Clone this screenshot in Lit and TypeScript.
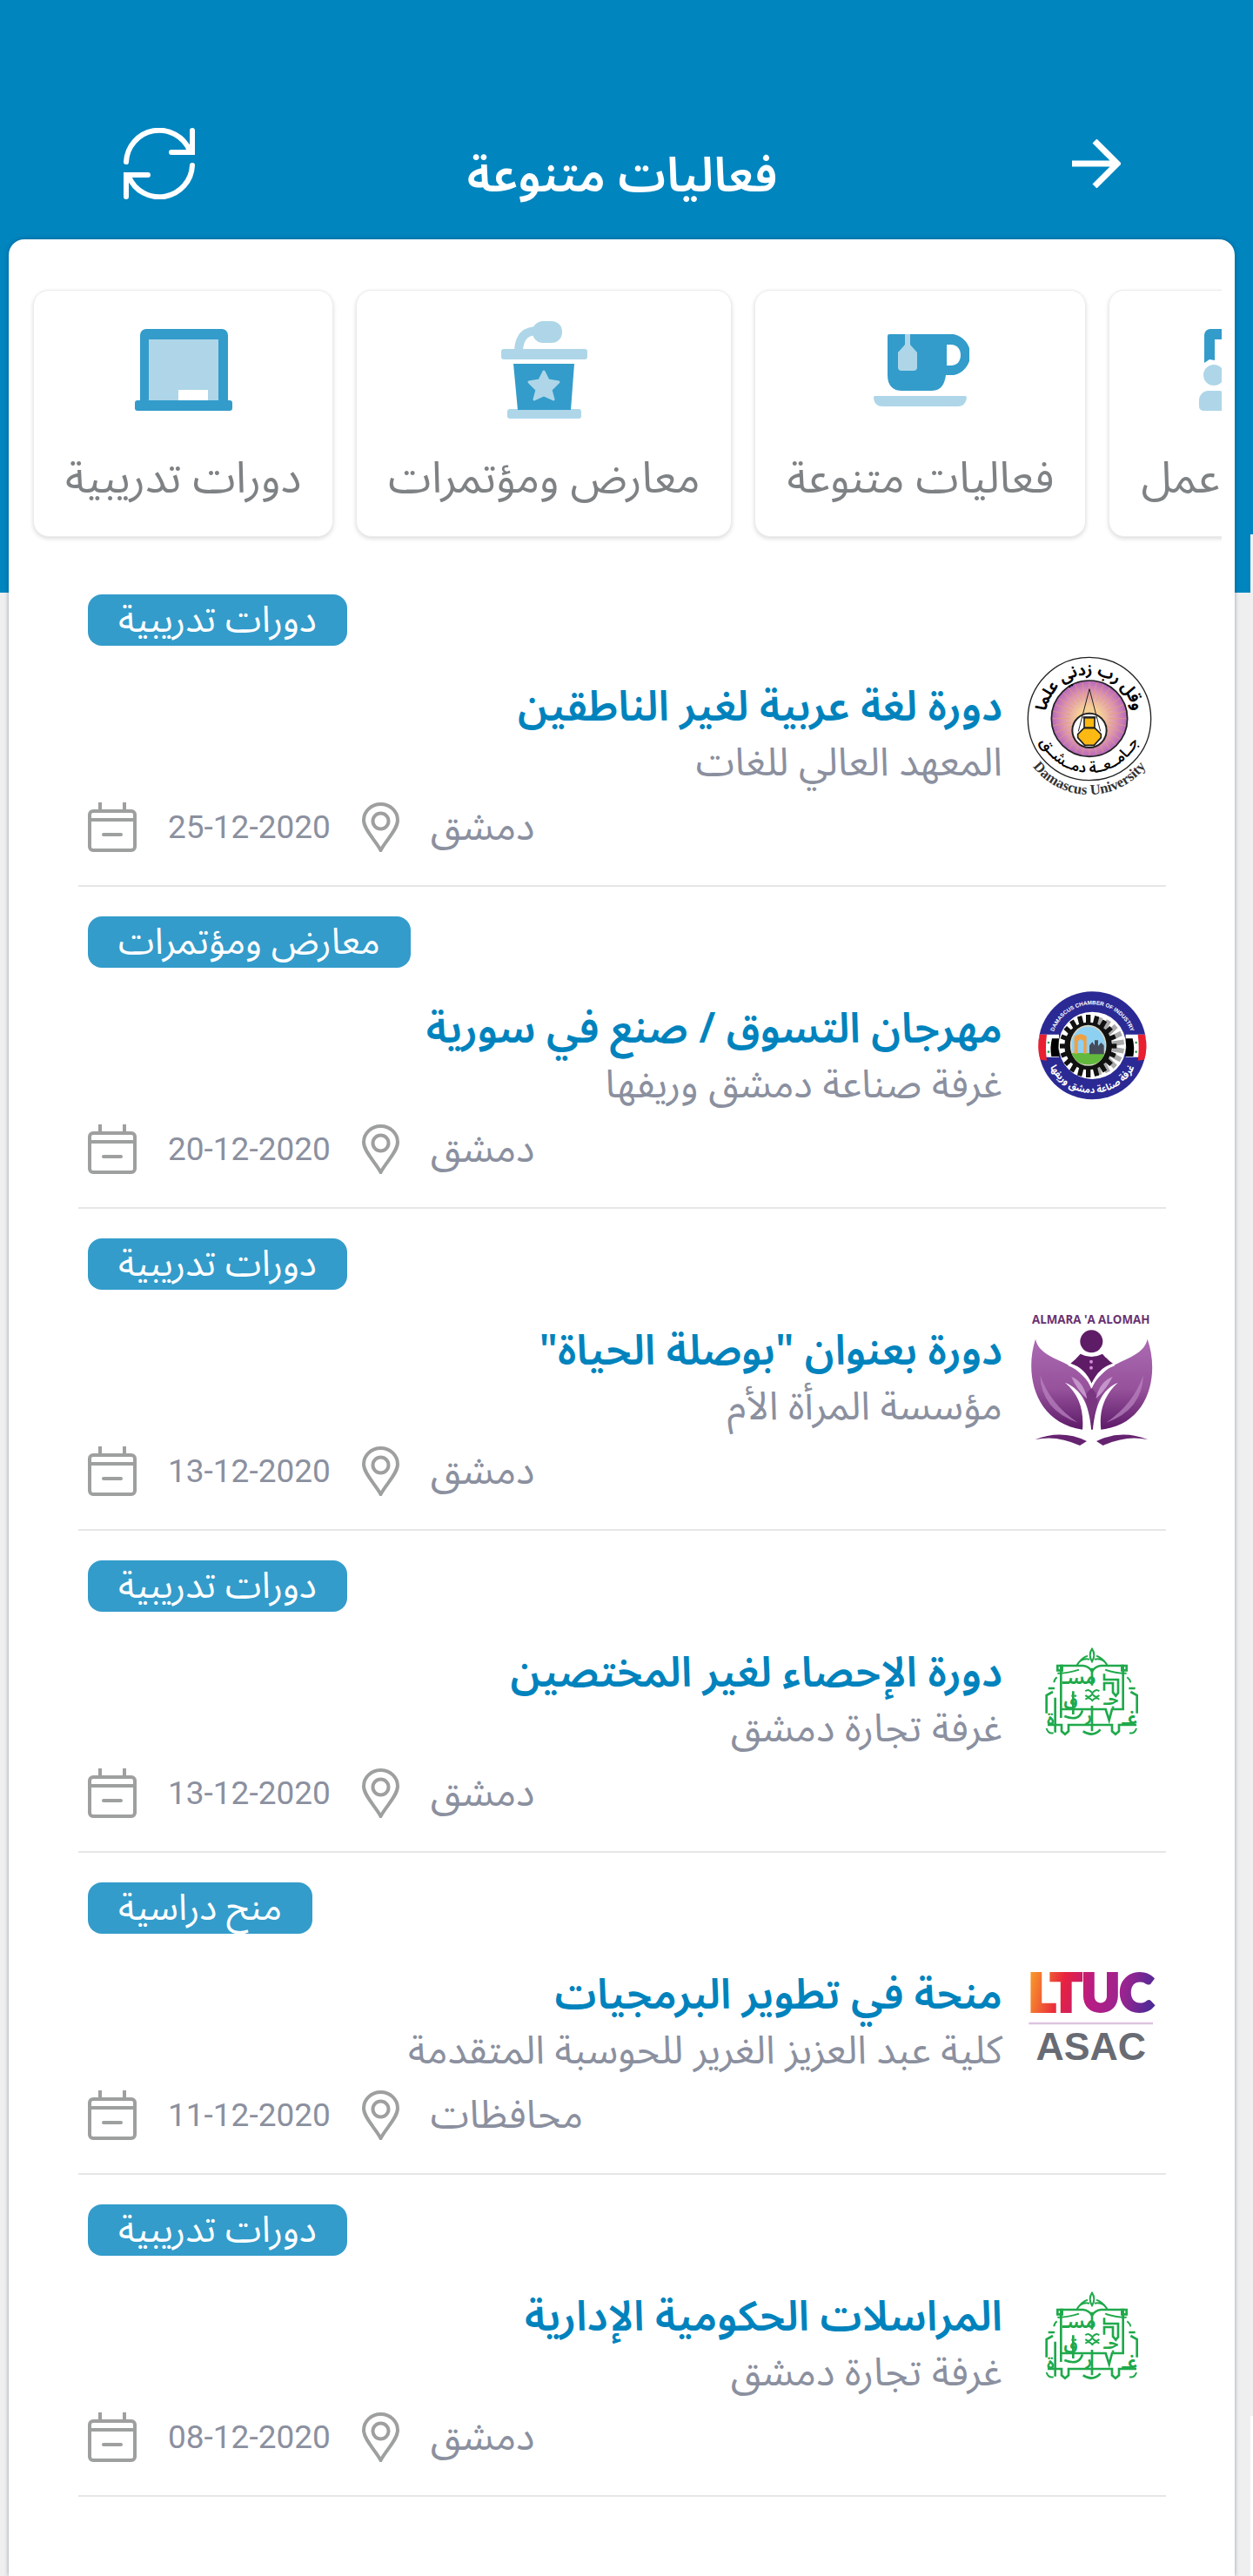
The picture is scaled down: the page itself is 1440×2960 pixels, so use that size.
import { LitElement, html, svg, css, TemplateResult } from "lit";
import { customElement, property } from "lit/decorators.js";

type LogoName = "university" | "industry" | "woman" | "commerce" | "ltuc";
type CategoryIcon = "board" | "podium" | "cup" | "workshop";

interface EventItem {
  category: string;
  title: string;
  host: string;
  date: string;
  city: string;
  logo: LogoName;
}

const CATEGORIES: { label: string; icon: CategoryIcon }[] = [
  { label: "دورات تدريبية", icon: "board" },
  { label: "معارض ومؤتمرات", icon: "podium" },
  { label: "فعاليات متنوعة", icon: "cup" },
  { label: "ورشات عمل", icon: "workshop" },
];

const EVENTS: EventItem[] = [
  { category: "دورات تدريبية", title: "دورة لغة عربية لغير الناطقين", host: "المعهد العالي للغات", date: "25-12-2020", city: "دمشق", logo: "university" },
  { category: "معارض ومؤتمرات", title: "مهرجان التسوق / صنع في سورية", host: "غرفة صناعة دمشق وريفها", date: "20-12-2020", city: "دمشق", logo: "industry" },
  { category: "دورات تدريبية", title: "دورة بعنوان \"بوصلة الحياة\"", host: "مؤسسة المرأة الأم", date: "13-12-2020", city: "دمشق", logo: "woman" },
  { category: "دورات تدريبية", title: "دورة الإحصاء لغير المختصين", host: "غرفة تجارة دمشق", date: "13-12-2020", city: "دمشق", logo: "commerce" },
  { category: "منح دراسية", title: "منحة في تطوير البرمجيات", host: "كلية عبد العزيز الغرير للحوسبة المتقدمة", date: "11-12-2020", city: "محافظات", logo: "ltuc" },
  { category: "دورات تدريبية", title: "المراسلات الحكومية الإدارية", host: "غرفة تجارة دمشق", date: "08-12-2020", city: "دمشق", logo: "commerce" },
];

const range = (n: number) => Array.from({ length: n }, (_, i) => i);

const categoryIcons: Record<CategoryIcon, TemplateResult> = {
  board: svg`
    <path fill="#339ccb" d="M6 94V16a7 7 0 0 1 7-7h87a7 7 0 0 1 7 7v78z"/>
    <rect fill="#aed6e8" x="16" y="21" width="80" height="71"/>
    <rect fill="#fff" x="50" y="79" width="34" height="12"/>
    <rect fill="#339ccb" x="0" y="91" width="112" height="12" rx="3"/>`,
  podium: svg`
    <g fill="#aed6e8">
      <rect x="7" y="32" width="99" height="12" rx="3"/>
      <rect x="14" y="101" width="85" height="11" rx="3"/>
      <rect x="43" y="0" width="34" height="25" rx="12"/>
    </g>
    <path d="M27 33c1-15 8-22 22-22" fill="none" stroke="#aed6e8" stroke-width="10"/>
    <path fill="#339ccb" d="M21 49h70l-4 53H26z"/>
    <path fill="#aed6e8" stroke="#aed6e8" stroke-width="3" stroke-linejoin="round"
      d="M56 58l5 10 12 2-9 9 3 11-11-5-11 5 3-11-9-9 12-2z"/>`,
  cup: svg`
    <path fill="#339ccb" fill-rule="evenodd"
      d="M20 15h74a24 24 0 0 1 0 47h-9c-1 9-5 18-16 18H35C24 80 18 74 18 62V17a2 2 0 0 1 2-2zM86 27v24h5c7 0 11-5 11-12s-4-12-11-12z"/>
    <path fill="#aed6e8" d="M38 15h6v12l8 9v18a4 4 0 0 1-4 3H34a4 4 0 0 1-4-3V36l8-9z"/>
    <path fill="#aed6e8" d="M3 86h104a2 2 0 0 1 2 2c-1 6-4 10-10 10H12C5 98 2 93 2 87z"/>`,
  workshop: svg`
    <path fill="#339ccb" d="M6 48V16a7 7 0 0 1 7-7h86a7 7 0 0 1 7 7v32l-6-4-6 2V21H18v24l-6-1z"/>
    <g fill="#aed6e8">
      <circle cx="17" cy="62" r="12"/><circle cx="56" cy="62" r="12"/><circle cx="95" cy="62" r="12"/>
      <path d="M0 98V91a11 11 0 0 1 11-11h12a11 11 0 0 1 11 11v7a5 5 0 0 1-5 5H5a5 5 0 0 1-5-5z"/>
      <path d="M39 98V91a11 11 0 0 1 11-11h12a11 11 0 0 1 11 11v7a5 5 0 0 1-5 5H44a5 5 0 0 1-5-5z"/>
      <path d="M78 98V91a11 11 0 0 1 11-11h12a11 11 0 0 1 11 11v7a5 5 0 0 1-5 5H83a5 5 0 0 1-5-5z"/>
    </g>`,
};

const logos: Record<LogoName, TemplateResult> = {
  university: html`<svg viewBox="39 33 480 540" role="img" aria-label="Damascus University">
    <defs>
      <radialGradient id="sun"><stop offset=".3" stop-color="#f6cf96"/><stop offset=".7" stop-color="#dd96b0"/><stop offset="1" stop-color="#b666bb"/></radialGradient>
      <path id="motto" d="M124 285A152 152 0 0 1 428 285"/>
      <path id="name-ar" d="M90 285A186 186 0 0 0 462 285"/>
      <path id="name-en" d="M47 390A246 246 0 0 0 505 390"/>
    </defs>
    <circle cx="276" cy="285" r="212" fill="#fff" stroke="#222" stroke-width="4"/>
    <circle cx="276" cy="284" r="131" fill="url(#sun)" stroke="#222" stroke-width="5"/>
    <g stroke="#e8a06e" stroke-width="3" opacity=".7">
      ${range(32).map((i) => {
        const a = (i * Math.PI) / 16;
        return svg`<line x1=${276 + 66 * Math.cos(a)} y1=${284 + 66 * Math.sin(a)} x2=${276 + 126 * Math.cos(a)} y2=${284 + 126 * Math.sin(a)}/>`;
      })}
    </g>
    <circle cx="276" cy="325" r="59" fill="#fff" stroke="#222" stroke-width="6"/>
    <path d="M276 182l-38 146M276 182l38 146" stroke="#222" stroke-width="3" fill="none"/>
    <path d="M258 280h36v36l22 22v12l-24 26h-32l-24-26v-12l22-22z" fill="#fdb913" stroke="#222" stroke-width="5"/>
    <path d="M254 280h44M258 316h36" stroke="#222" stroke-width="7"/>
    <text class="ar" font-size="54" font-weight="700" text-anchor="middle" direction="rtl"><textPath href="#motto" startOffset="50%">وقل رب زدني علما</textPath></text>
    <text class="ar" font-size="50" font-weight="600" text-anchor="middle" direction="rtl"><textPath href="#name-ar" startOffset="50%">جــامــعــة دمــشــق</textPath></text>
    <text class="serif" font-size="50" font-weight="700" fill="#333" text-anchor="middle"><textPath href="#name-en" startOffset="50%">Damascus University</textPath></text>
  </svg>`,
  industry: html`<svg viewBox="39 6 480 540" role="img" aria-label="Damascus Chamber of Industry">
    <defs>
      <path id="top-arc" d="M145 274A141 141 0 0 1 427 274"/>
      <path id="bottom-arc" d="M122 274A164 164 0 0 0 450 274"/>
    </defs>
    <circle cx="286" cy="274" r="186" fill="#2b2a94"/>
    <circle cx="286" cy="274" r="116" fill="#fff"/>
    <path d="M105 236h66v78h-66q-12-39 0-78z" fill="#fff"/><path d="M467 236h-66v78h66q12-39 0-78z" fill="#fff"/>
    <path d="M105 236h24q-6 44 0 90l-22-3q-14-43-2-87z" fill="#e8202f"/><path d="M467 236h-24q6 44 0 90l22-3q14-43 2-87z" fill="#e8202f"/>
    <path d="M147 250h24q-4 32 2 62h-28q-6-31 2-62z"/><path d="M425 250h-24q4 32-2 62h28q6-31-2-62z"/>
    <g fill="#2b9d56"><circle cx="135" cy="264" r="4"/><circle cx="135" cy="296" r="4"/><circle cx="437" cy="264" r="4"/><circle cx="437" cy="296" r="4"/></g>
    <g stroke="#aaa" stroke-width="17">
      ${range(10).map((i) => {
        const a = ((i * 18 - 80) * Math.PI) / 180;
        return svg`<line x1=${296 + 60 * Math.cos(a)} y1=${276 + 60 * Math.sin(a)} x2=${296 + 100 * Math.cos(a)} y2=${276 + 100 * Math.sin(a)}/>`;
      })}
    </g>
    <g stroke="#111" stroke-width="16">
      ${range(20).map((i) => {
        const a = (i * Math.PI) / 10;
        return svg`<line x1=${272 + 60 * Math.cos(a)} y1=${276 + 60 * Math.sin(a)} x2=${272 + 98 * Math.cos(a)} y2=${276 + 108 * Math.sin(a)}/>`;
      })}
    </g>
    <circle cx="272" cy="276" r="82" fill="#111"/>
    <ellipse cx="272" cy="274" rx="60" ry="68" fill="#8ed0f2" stroke="#d6d6c4" stroke-width="5"/>
    <path d="M215 300h114q-12 40-57 40t-57-40z" fill="#63b93e"/>
    <path d="M224 302v-58q20-18 42-2v60h-10v-42q-10-14-20 0v42z" fill="#f0a043"/>
    <path d="M276 304v-30l10-12 8 12v-18h12v20l10-12 10 10v30z" fill="#444c5c"/>
    <text class="label" font-weight="700" fill="#fff" text-anchor="middle"><textPath href="#top-arc" startOffset="50%">DAMASCUS CHAMBER OF INDUSTRY</textPath></text>
    <text class="ar" font-size="32" font-weight="700" fill="#fff" text-anchor="middle" direction="rtl"><textPath href="#bottom-arc" startOffset="50%">غرفة صناعة دمشق وريفها</textPath></text>
  </svg>`,
  woman: html`<svg viewBox="39 6 480 540" role="img" aria-label="Almara'a Alomah">
    <defs>
      <linearGradient id="petal" x1="0" y1="0" x2="0" y2="1"><stop offset="0" stop-color="#ab6bb2"/><stop offset=".55" stop-color="#96529b"/><stop offset="1" stop-color="#5d1a68"/></linearGradient>
    </defs>
    <text class="latin" x="281" y="124" font-size="40" font-weight="700" fill="#6a3170" text-anchor="middle">ALMARA 'A ALOMAH</text>
    <circle cx="283" cy="184" r="39" fill="#5f1c66"/>
    <path d="M90 176C104 240 190 245 240 290 262 310 276 326 284 345 292 326 304 310 326 290 376 245 462 240 476 176 520 300 480 470 316 488L252 488C90 465 50 300 90 176z" fill="url(#petal)"/>
    <path d="M211 260q16-12 34-33 38 20 76 0 20 24 36 33-50 15-73 70-23-55-73-70z" fill="#5f1c66"/>
    <path d="M204 264q54 18 79 74 25-56 79-74" fill="none" stroke="#fff" stroke-width="8"/>
    <circle cx="282" cy="254" r="6" fill="#d58bd6"/><circle cx="282" cy="275" r="6" fill="#d58bd6"/>
    <path d="M192 326C250 350 280 400 285 524 292 400 320 350 374 326 330 366 308 420 316 490L252 490C258 420 240 366 192 326z" fill="#fff"/>
    <path d="M284 346C300 360 304 380 303 392 292 412 287 440 284 465 280 440 276 412 264 392 258 372 268 358 284 346z" fill="#7a3580"/>
    <path d="M214 306Q256 322 268 382 232 350 214 306zM356 306Q310 322 298 382 334 350 356 306z" fill="#c594cb"/>
    <path d="M106 300Q110 420 236 464 140 400 106 300zM462 300Q458 420 334 464 428 400 462 300z" fill="#bb86c2" opacity=".7"/>
    <path d="M88 523Q180 486 267 528L243 543Q160 505 88 523zM478 523Q386 486 300 528L323 543Q406 505 478 523z" fill="#662370"/>
  </svg>`,
  commerce: html`<svg viewBox="39 -24 480 540" role="img" aria-label="غرفة تجارة دمشق">
    <g fill="none" stroke="#1fa94b" stroke-width="8">
      <path d="M178 342V162h76q20 2 31 20 11-18 31-20h76v150h-38l-10 38-12-38H178"/>
      <path d="M166 162h16v16h-16zM388 162h16v16h-16z"/>
      <path d="M128 326v-62l22-12M440 326v-62l-22-12M134 240h22M412 240h22"/>
      <path d="M158 272v120M132 366h48v22l12 10 12-10v-22h150v22l12 10 12-10v-22h60"/>
      <path d="M285 170v60M285 300v88M327 190v20h48v46l-8 10-10-12v-32h-30v26M220 250v80"/>
      <path d="M254 388q34 22 60-6M190 336q50 20 62-20"/>
      <path d="M262 250q12-10 24 6 12-16 24-6M262 264q12 12 24-4 12 16 24 4M262 278q12-10 24 4 12-14 24-4" stroke-width="6"/>
    </g>
    <g fill="none" stroke="#1fa94b" stroke-width="6">
      <path d="M285 104q-14 20 0 44 14-24 0-44zM276 140q-30-6-44 22M294 140q30-6 44 22M232 162q14-26 38-34M338 162q-14-26-38-34"/>
      <path d="M166 188q30 2 74-12M404 188q-30 2-74-12M164 202q-10 8-10 18M406 202q10 8 12 18M128 378q6 20 24 16M438 378q-6 20-24 16"/>
    </g>
    <g class="ar" fill="#1fa94b" font-weight="700" direction="rtl" text-anchor="middle">
      <text x="240" y="226" font-size="62">مسـ</text>
      <text x="212" y="300" font-size="58">ق</text>
      <text x="350" y="298" font-size="56">جـ</text>
      <text x="274" y="354" font-size="56">ر</text>
      <text x="142" y="366" font-size="56">ة</text>
      <text x="414" y="366" font-size="64">غـ</text>
    </g>
  </svg>`,
  ltuc: html`<svg viewBox="39 -24 480 540" role="img" aria-label="LTUC ASAC">
    <defs>
      <linearGradient id="ltuc" gradientUnits="userSpaceOnUse" x1="66" y1="120" x2="495" y2="220"><stop offset="0" stop-color="#f9a029"/><stop offset=".28" stop-color="#e8223f"/><stop offset=".5" stop-color="#b91c82"/><stop offset=".75" stop-color="#9a2490"/><stop offset="1" stop-color="#4c2a96"/></linearGradient>
    </defs>
    <text class="ltuc" x="281" y="242" fill="url(#ltuc)" stroke="url(#ltuc)" stroke-width="12" font-size="176" text-anchor="middle">LTUC</text>
    <path d="M67 285h428" stroke="#dcc4df" stroke-width="8"/>
    <text class="asac" x="281" y="412" font-size="134" font-weight="700" fill="#686b73" text-anchor="middle">ASAC</text>
  </svg>`,
};

@customElement("event-row")
class EventRow extends LitElement {
  @property({ attribute: false }) event!: EventItem;

  static styles = css`
    :host {
      display: block;
    }
    .event {
      display: grid;
      grid-template-columns: auto 1fr;
      grid-template-areas: "badge badge" "logo text" "logo meta";
      grid-template-rows: auto auto auto;
      column-gap: 21px;
      padding: 34px 7px 38px 11px;
      border-bottom: 2px solid #e6e6e6;
      direction: rtl;
    }
    .badge {
      grid-area: badge;
      justify-self: end;
      padding: 0 35px;
      border-radius: 16px;
      background: #339ccb;
      color: #fff;
      font-size: 42px;
      line-height: 59px;
    }
    .logo {
      grid-area: logo;
      direction: ltr;
    }
    .logo svg {
      display: block;
      width: 160px;
      height: 180px;
    }
    .ar {
      font-family: "Noto Sans Arabic", "DejaVu Sans", sans-serif;
    }
    .serif {
      font-family: "Liberation Serif", serif;
    }
    .label {
      font-family: "Liberation Sans", sans-serif;
      font-size: 19px;
    }
    .latin {
      font-family: "Open Sans", sans-serif;
    }
    .asac {
      font-family: "Liberation Sans", sans-serif;
    }
    .ltuc {
      font-family: Lato, sans-serif;
      font-weight: 900;
    }
    .text {
      grid-area: text;
      min-height: 141px;
      padding-top: 39px;
    }
    .title {
      margin: 0;
      font-size: 48px;
      line-height: 64px;
      font-weight: 600;
    }
    .title a {
      color: #0083bd;
      text-decoration: none;
    }
    .host {
      margin: 0;
      color: #8b909f;
      font-size: 45px;
      line-height: 64px;
    }
    .meta {
      grid-area: meta;
      justify-self: end;
      display: flex;
      align-items: center;
      gap: 36px;
      height: 57px;
      direction: ltr;
      color: #8b909f;
      font-size: 45px;
      line-height: 56px;
    }
    .date {
      font-family: Roboto, sans-serif;
      font-size: 37px;
    }
    .icon {
      display: block;
      height: 57px;
      flex: none;
      fill: none;
      stroke: #9da09f;
      stroke-width: 4;
    }
  `;

  render() {
    const e = this.event;
    return html`
      <article class="event">
        <span class="badge">${e.category}</span>
        <div class="logo">${logos[e.logo]}</div>
        <div class="text">
          <h2 class="title"><a href="#">${e.title}</a></h2>
          <p class="host">${e.host}</p>
        </div>
        <div class="meta">
          <svg class="icon" width="56" height="57" viewBox="0 0 56 57" aria-hidden="true">
            <rect x="2" y="10" width="52" height="45" rx="4"/>
            <path d="M2 20h52M14 0v10M42 0v10"/>
            <path d="M18 37h20" stroke-linecap="round"/>
          </svg>
          <time class="date">${e.date}</time>
          <svg class="icon" width="43" height="57" viewBox="0 0 43 57" aria-hidden="true">
            <path d="M21.500 55C15 43 2 31 2 20.500a19.500 18.500 0 0 1 39 0C41 31 28 43 21.500 55z"/>
            <circle cx="21.500" cy="21.500" r="9"/>
          </svg>
          <span>${e.city}</span>
        </div>
      </article>
    `;
  }
}

@customElement("app-root")
class AppRoot extends LitElement {
  static styles = css`
    :host {
      display: block;
      position: relative;
      min-height: 100vh;
      background: linear-gradient(#0085bf 0 681px, #efefef 681px);
      font-family: "Noto Sans Arabic", "DejaVu Sans", sans-serif;
      overflow: hidden;
    }
    .page {
      display: flex;
      flex-direction: column;
      min-height: 100vh;
    }
    .bar {
      display: grid;
      grid-template-columns: 1fr auto 1fr;
      align-items: center;
      box-sizing: border-box;
      height: 275px;
      padding: 100px 152px 0 142px;
      color: #fff;
    }
    .bar h1 {
      margin: 0;
      padding-top: 30px;
      font-size: 55px;
      line-height: 64px;
      font-weight: 600;
    }
    .tool {
      display: block;
      justify-self: start;
      padding: 0;
      border: 0;
      background: none;
      color: inherit;
    }
    .tool.back {
      justify-self: end;
    }
    .tool svg {
      display: block;
      fill: none;
      stroke: currentColor;
    }
    .sheet {
      flex: 1;
      margin: 0 21px 0 10px;
      border-radius: 18px 18px 0 0;
      background: #fff;
      box-shadow: 0 0 5px rgba(0, 40, 70, 0.4);
    }
    .categories {
      display: flex;
      gap: 26px;
      margin: 0 15px;
      padding: 58px 13px 32px;
      overflow: hidden;
    }
    .category {
      flex: none;
      display: flex;
      flex-direction: column;
      align-items: center;
      gap: 37px;
      box-sizing: border-box;
      height: 284px;
      padding: 35px 36px 0;
      border: 1px solid #ececec;
      border-radius: 18px;
      background: #fff;
      box-shadow: 0 2px 5px rgba(0, 0, 0, 0.14);
      color: #7f8284;
      font-family: inherit;
      font-size: 50px;
      font-weight: 400;
      line-height: 64px;
      white-space: nowrap;
    }
    .category svg {
      display: block;
    }
    .events {
      margin: 0;
      padding: 0 79px 0 80px;
      list-style: none;
    }
    .peek {
      position: absolute;
      top: 614px;
      right: 0;
      bottom: 0;
      width: 3px;
      background: linear-gradient(#f0f0f0 0 2162px, #fff 2162px);
    }
  `;

  render() {
    return html`
      <div class="page">
        <header class="bar">
          <button class="tool" aria-label="تحديث">
            <svg width="82" height="82" viewBox="0 0 82 82" stroke-width="6" stroke-linecap="round">
              <path d="M3 39A38 38 0 0 1 76 26M79 3v25H55"/>
              <path d="M79 43A38 38 0 0 1 6 56M3 79V54h25"/>
            </svg>
          </button>
          <h1 dir="rtl">فعاليات متنوعة</h1>
          <button class="tool back" aria-label="رجوع">
            <svg width="56" height="56" viewBox="0 0 56 56" stroke-width="7">
              <path d="M0 28h51M26 2l26 26-26 26"/>
            </svg>
          </button>
        </header>
        <main class="sheet">
          <nav class="categories">
            ${CATEGORIES.map(
              (c) => html`<button class="category" dir="rtl">
                <svg width="112" height="112" viewBox="0 0 112 112" aria-hidden="true">${categoryIcons[c.icon]}</svg>
                ${c.label}
              </button>`,
            )}
          </nav>
          <ul class="events">
            ${EVENTS.map((e) => html`<li><event-row .event=${e}></event-row></li>`)}
          </ul>
        </main>
      </div>
      <div class="peek"></div>
    `;
  }
}
